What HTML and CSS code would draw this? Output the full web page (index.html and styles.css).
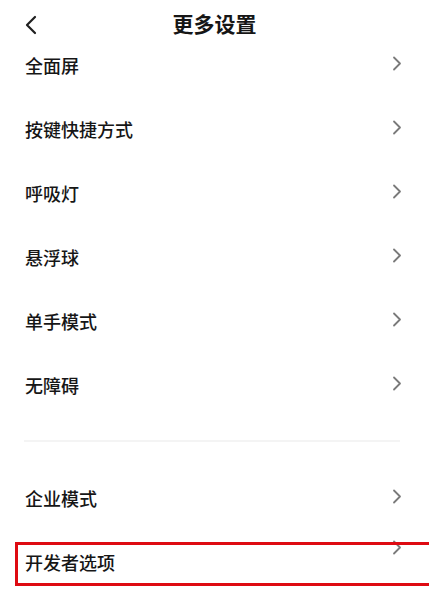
FILE: index.html
```html
<!DOCTYPE html>
<html lang="zh-CN">
<head>
<meta charset="utf-8">
<title>更多设置</title>
<link rel="stylesheet" href="styles.css">
</head>
<body>
<div class="page">
  <header class="header">
    <svg class="back" width="14" height="20" viewBox="0 0 14 20"><path d="M11 2 L3 10 L11 18" fill="none" stroke="#1f1f1f" stroke-width="2.2" stroke-linecap="round" stroke-linejoin="round"/></svg>
    <h1 class="title">更多设置</h1>
  </header>
  <ul class="list">
    <li class="row"><span class="label">全面屏</span><svg class="chev" width="10" height="15" viewBox="0 0 10 15"><path d="M2 1.5 L8 7.5 L2 13.5" fill="none" stroke="#7a7a7a" stroke-width="1.8" stroke-linecap="round" stroke-linejoin="round"/></svg></li>
    <li class="row"><span class="label">按键快捷方式</span><svg class="chev" width="10" height="15" viewBox="0 0 10 15"><path d="M2 1.5 L8 7.5 L2 13.5" fill="none" stroke="#7a7a7a" stroke-width="1.8" stroke-linecap="round" stroke-linejoin="round"/></svg></li>
    <li class="row"><span class="label">呼吸灯</span><svg class="chev" width="10" height="15" viewBox="0 0 10 15"><path d="M2 1.5 L8 7.5 L2 13.5" fill="none" stroke="#7a7a7a" stroke-width="1.8" stroke-linecap="round" stroke-linejoin="round"/></svg></li>
    <li class="row"><span class="label">悬浮球</span><svg class="chev" width="10" height="15" viewBox="0 0 10 15"><path d="M2 1.5 L8 7.5 L2 13.5" fill="none" stroke="#7a7a7a" stroke-width="1.8" stroke-linecap="round" stroke-linejoin="round"/></svg></li>
    <li class="row"><span class="label">单手模式</span><svg class="chev" width="10" height="15" viewBox="0 0 10 15"><path d="M2 1.5 L8 7.5 L2 13.5" fill="none" stroke="#7a7a7a" stroke-width="1.8" stroke-linecap="round" stroke-linejoin="round"/></svg></li>
    <li class="row"><span class="label">无障碍</span><svg class="chev" width="10" height="15" viewBox="0 0 10 15"><path d="M2 1.5 L8 7.5 L2 13.5" fill="none" stroke="#7a7a7a" stroke-width="1.8" stroke-linecap="round" stroke-linejoin="round"/></svg></li>
  </ul>
  <div class="divider"></div>
  <ul class="list">
    <li class="row"><span class="label">企业模式</span><svg class="chev" width="10" height="15" viewBox="0 0 10 15"><path d="M2 1.5 L8 7.5 L2 13.5" fill="none" stroke="#7a7a7a" stroke-width="1.8" stroke-linecap="round" stroke-linejoin="round"/></svg></li>
    <li class="row row-marked"><span class="label">开发者选项</span><svg class="chev chev-high" width="10" height="15" viewBox="0 0 10 15"><path d="M2 1.5 L8 7.5 L2 13.5" fill="none" stroke="#7a7a7a" stroke-width="1.8" stroke-linecap="round" stroke-linejoin="round"/></svg><span class="mark"></span></li>
  </ul>
</div>
</body>
</html>
```
FILE: styles.css
```css
html, body {
  margin: 0;
  padding: 0;
  background: #ffffff;
}
body {
  font-family: "Noto Sans CJK SC", "Noto Sans", sans-serif;
  color: #161616;
  width: 429px;
  height: 606px;
  overflow: hidden;
}
.page {
  display: flex;
  flex-direction: column;
}
.header {
  height: 33px;
  display: flex;
  align-items: flex-start;
  justify-content: center;
  position: relative;
}
.back {
  position: absolute;
  left: 24px;
  top: 15px;
}
.title {
  margin: 0;
  padding-top: 10px;
  font-size: 21px;
  line-height: 26px;
  font-weight: 700;
  color: #161616;
}
.list {
  list-style: none;
  margin: 0;
  padding: 0;
}
.row {
  height: 64px;
  display: flex;
  align-items: center;
  justify-content: space-between;
  padding: 0 27px 0 25px;
}
.label {
  font-size: 18px;
  line-height: 24px;
  font-weight: 500;
}
.chev {
  display: block;
  margin-top: -3px;
}
.divider {
  height: 2px;
  margin: 23px 29px 24px 24px;
  background: #f4f4f4;
}
.row-marked {
  position: relative;
}
.chev-high {
  margin-top: -30px;
}
.mark {
  position: absolute;
  left: 15px;
  right: -10px;
  top: 12px;
  height: 38px;
  border: 3px solid #de0a12;
  border-right: none;
  pointer-events: none;
}
```
